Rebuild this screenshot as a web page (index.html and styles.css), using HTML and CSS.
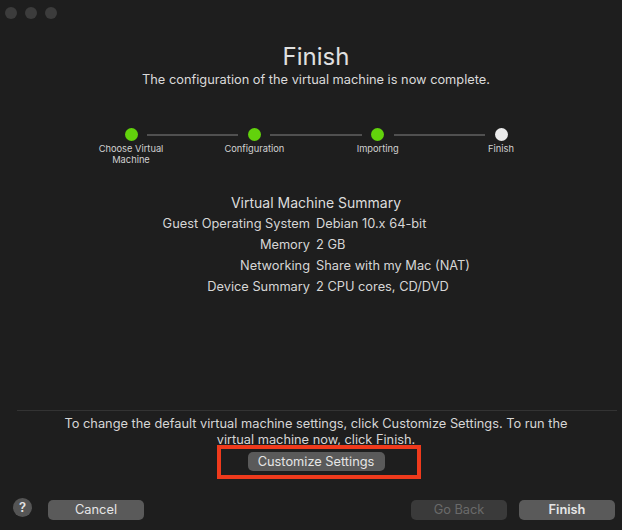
FILE: index.html
```html
<!DOCTYPE html>
<html lang="en">
<head>
<meta charset="utf-8">
<title>Finish</title>
<link rel="stylesheet" href="styles.css">
</head>
<body>
<div class="window">
  <div class="titlebar">
    <span class="light"></span><span class="light"></span><span class="light"></span>
  </div>
  <div class="content">
    <h1 class="title">Finish</h1>
    <p class="subtitle">The configuration of the virtual machine is now complete.</p>

    <div class="stepper">
      <div class="step first">
        <div class="track"><span class="seg"></span><span class="dot done"></span><span class="seg"></span></div>
        <div class="label">Choose Virtual<br>Machine</div>
      </div>
      <div class="step">
        <div class="track"><span class="seg"></span><span class="dot done"></span><span class="seg"></span></div>
        <div class="label">Configuration</div>
      </div>
      <div class="step">
        <div class="track"><span class="seg"></span><span class="dot done"></span><span class="seg"></span></div>
        <div class="label">Importing</div>
      </div>
      <div class="step last">
        <div class="track"><span class="seg"></span><span class="dot current"></span><span class="seg"></span></div>
        <div class="label">Finish</div>
      </div>
    </div>

    <div class="summary">
      <h2 class="summary-title">Virtual Machine Summary</h2>
      <div class="summary-grid">
        <span class="key">Guest Operating System</span><span class="val">Debian 10.x 64-bit</span>
        <span class="key">Memory</span><span class="val">2 GB</span>
        <span class="key">Networking</span><span class="val">Share with my Mac (NAT)</span>
        <span class="key">Device Summary</span><span class="val">2 CPU cores, CD/DVD</span>
      </div>
    </div>
  </div>

  <div class="footer">
    <div class="separator"></div>
    <p class="hint">To change the default virtual machine settings, click Customize Settings. To run the virtual machine now, click Finish.</p>
    <div class="customize-row">
      <button class="btn customize">Customize Settings<span class="highlight"></span></button>
    </div>
    <div class="actions">
      <span class="help">?</span>
      <button class="btn cancel">Cancel</button>
      <span class="spacer"></span>
      <button class="btn disabled">Go Back</button>
      <button class="btn primary">Finish</button>
    </div>
  </div>
</div>
</body>
</html>
```

FILE: styles.css
```css
* { box-sizing: border-box; }
html, body {
  margin: 0;
  padding: 0;
  background: #1e1e1e;
}
body {
  font-family: Inter, "Liberation Sans", Arial, sans-serif;
  color: #d9d9d9;
  width: 622px;
  height: 530px;
  overflow: hidden;
}
.window {
  width: 622px;
  height: 530px;
  display: flex;
  flex-direction: column;
}
.titlebar {
  display: flex;
  gap: 8px;
  padding: 7px 0 0 5px;
  height: 19px;
}
.light {
  width: 12px;
  height: 12px;
  border-radius: 50%;
  background: #3c3c3c;
}
.content {
  padding-left: 10px;
  display: flex;
  flex-direction: column;
  align-items: stretch;
}
.title {
  margin: 23px 0 0;
  font-size: 24px;
  line-height: 30px;
  font-weight: normal;
  text-align: center;
  color: #e0e0e0;
}
.subtitle {
  margin: 0;
  font-size: 12.8px;
  line-height: 16px;
  text-align: center;
  color: #dadada;
}
.stepper {
  margin: 40px auto 0;
  display: grid;
  grid-template-columns: repeat(4, 123.33px);
}
.track {
  display: flex;
  align-items: center;
  height: 13px;
}
.seg {
  flex: 1;
  height: 2px;
  background: #505050;
}
.track .seg:first-child { margin-right: 9.5px; }
.track .seg:last-child { margin-left: 9.5px; }
.first .track .seg:first-child,
.last .track .seg:last-child { background: transparent; }
.dot {
  width: 13px;
  height: 13px;
  border-radius: 50%;
  flex: none;
}
.dot.done { background: #62d20c; }
.dot.current { background: #ebebeb; }
.label {
  margin-top: 2px;
  font-size: 9.3px;
  line-height: 11px;
  text-align: center;
  color: #d0d0d0;
}
.summary {
  margin-top: 29px;
}
.summary-title {
  margin: 0;
  font-size: 14px;
  line-height: 18px;
  font-weight: normal;
  text-align: center;
  color: #dcdcdc;
}
.summary-grid {
  display: grid;
  grid-template-columns: 1fr 1fr;
  column-gap: 6px;
  padding-right: 6px;
  margin-top: 1px;
  font-size: 12.8px;
  line-height: 21px;
  color: #d6d6d6;
}
.key { text-align: right; }
.val { text-align: left; }

.footer {
  margin-top: auto;
  display: flex;
  flex-direction: column;
  padding-bottom: 10px;
}
.separator {
  height: 1px;
  background: #333333;
  margin: 0 5px 0 17px;
}
.hint {
  margin: 5px auto 0;
  width: 520px;
  padding-left: 10px;
  box-sizing: content-box;
  font-size: 12.8px;
  line-height: 16px;
  text-align: center;
  color: #d6d6d6;
}
.customize-row {
  display: flex;
  justify-content: center;
  padding-left: 10px;
  margin-top: 4px;
}
.btn {
  font-family: Inter, "Liberation Sans", Arial, sans-serif;
  font-size: 12.8px;
  line-height: 20px;
  height: 20px;
  padding: 0;
  border: 0;
  border-radius: 5px;
  background: #5a5a5a;
  color: #e6e6e6;
  text-align: center;
}
.customize {
  position: relative;
  width: 137px;
  height: 19px;
  line-height: 19px;
}
.highlight {
  position: absolute;
  left: -31px;
  top: -7px;
  right: -36px;
  bottom: -8px;
  border: 4px solid #ef3a1c;
  pointer-events: none;
}
.actions {
  margin-top: 29px;
  display: flex;
  align-items: flex-start;
  padding: 0 7px 0 13px;
  height: 20px;
}
.help {
  width: 19px;
  height: 19px;
  border-radius: 50%;
  background: #555555;
  color: #e4e4e4;
  font-size: 13px;
  font-weight: 600;
  line-height: 19px;
  text-align: center;
  margin-top: -2px;
}
.cancel {
  width: 96px;
  margin-left: 16px;
}
.spacer { flex: 1; }
.disabled {
  width: 96px;
  background: #3a3a3a;
  color: #6a6a6a;
}
.primary {
  width: 96px;
  margin-left: 12px;
  font-weight: 600;
}
```
